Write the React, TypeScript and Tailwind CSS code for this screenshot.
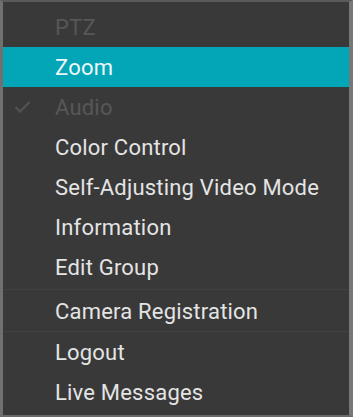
import React from "react";

type Item = { label: string; disabled?: boolean; active?: boolean; checked?: boolean };

const group1: Item[] = [
  { label: "PTZ", disabled: true },
  { label: "Zoom", active: true },
  { label: "Audio", disabled: true, checked: true },
  { label: "Color Control" },
  { label: "Self-Adjusting Video Mode" },
  { label: "Information" },
  { label: "Edit Group" },
];

function Row({ item }: { item: Item }) {
  return (
    <div
      className={
        "relative flex h-[40px] items-center pl-[52px] text-[22px] tracking-[0.2px] " +
        (item.active ? "bg-[#03a6b6] text-[#eef8f8]" : item.disabled ? "text-[#575757]" : "text-[#e4e4e4]")
      }
    >
      {item.checked && (
        <svg className="absolute left-[11px] top-[13px]" width="17" height="14" viewBox="0 0 17 14">
          <path d="M1.5 7 L6 11.5 L15.5 2" fill="none" stroke="#525252" strokeWidth="2.4" />
        </svg>
      )}
      <span>{item.label}</span>
    </div>
  );
}

export default function App() {
  return (
    <div
      className="h-[417px] w-[353px] border-t-2 border-b-2 border-l-[3px] border-r-[4px] border-t-[#5a5a5a] border-b-[#6a6a6a] border-l-[#707070] border-r-[#777777] bg-[#393939] overflow-hidden"
      style={{ fontFamily: "Roboto, 'Noto Sans', sans-serif" }}
    >
      <div className="pt-[5px]">
        {group1.map((it) => (
          <Row key={it.label} item={it} />
        ))}
      </div>
      <div className="flex h-[4px] items-center">
        <div className="h-px w-full bg-[#414141]" />
      </div>
      <Row item={{ label: "Camera Registration" }} />
      <div className="h-px bg-[#414141]" />
      <Row item={{ label: "Logout" }} />
      <Row item={{ label: "Live Messages" }} />
    </div>
  );
}
